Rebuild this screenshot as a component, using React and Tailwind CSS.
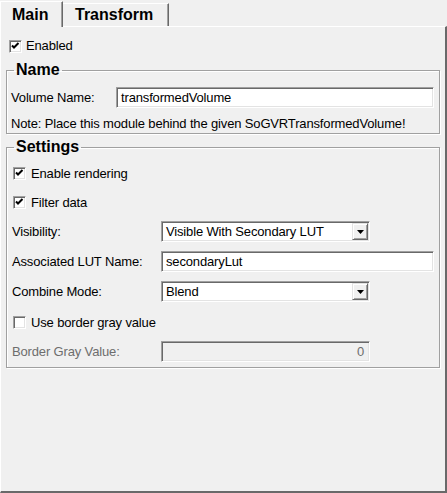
function CheckBox({ checked }) {
  return (
    <div className="w-[13px] h-[13px] shrink-0 bg-white border border-t-[#a0a0a0] border-l-[#a0a0a0] border-r-white border-b-white shadow-[inset_1px_1px_0_#696969,inset_-1px_-1px_0_#e3e3e3]">
      {checked && (
        <svg width="11" height="11" viewBox="0 0 11 11" className="block">
          <polyline points="2,4.5 4,6.5 8.5,2" fill="none" stroke="#000" strokeWidth="2" />
        </svg>
      )}
    </div>
  );
}

const sunken =
  "h-[21px] border border-t-[#a0a0a0] border-l-[#a0a0a0] border-r-white border-b-white shadow-[inset_1px_1px_0_#696969,inset_-1px_-1px_0_#e3e3e3] flex items-center";

function TextBox({ value, width }) {
  return (
    <div className={`${sunken} bg-white pl-[4px]`} style={{ width }}>
      {value}
    </div>
  );
}

function ComboBox({ value }) {
  return (
    <div className={`${sunken} w-[209px] bg-white pl-[4px] pr-[1px] justify-between`}>
      <span>{value}</span>
      <div className="w-[16px] h-[17px] bg-[#f0f0f0] border border-t-[#e3e3e3] border-l-[#e3e3e3] border-r-[#696969] border-b-[#696969] shadow-[inset_1px_1px_0_white,inset_-1px_-1px_0_#a0a0a0] flex items-center justify-center">
        <svg width="7" height="4" viewBox="0 0 7 4" className="block">
          <polygon points="0,0 7,0 3.5,4" fill="#000" />
        </svg>
      </div>
    </div>
  );
}

function Row({ label, children, className = "", muted }) {
  return (
    <div className={`flex items-center h-[21px] ${className}`}>
      <span className={`w-[149px] shrink-0 ${muted ? "text-[#6d6d6d]" : ""}`}>{label}</span>
      {children}
    </div>
  );
}

function CheckRow({ label, checked, className = "" }) {
  return (
    <div className={`flex items-center h-[21px] gap-[5px] pl-[1px] ${className}`}>
      <CheckBox checked={checked} />
      <span>{label}</span>
    </div>
  );
}

const group =
  "ml-[5px] w-[434px] border border-[#a0a0a0] shadow-[1px_1px_0_white,inset_1px_1px_0_white]";
const legend = "ml-[7px] px-[2px] h-[16px] leading-[16px] text-[16px] font-bold tracking-normal";

export default function App() {
  return (
    <div className="w-[447px] h-[493px] bg-[#f0f0f0] flex flex-col text-[13px] leading-[16px] tracking-[-0.15px] text-black font-['Liberation_Sans',sans-serif]">
      <div className="flex items-end h-[26px] shrink-0 tracking-normal">
        <div className="relative z-10 -mb-px h-[26px] w-[63px] bg-[#f0f0f0] border-l border-t border-white border-r border-r-[#696969] shadow-[inset_-1px_0_0_#a0a0a0] pl-[11px] pt-[5px] text-[16px] font-bold">
          Main
        </div>
        <div className="h-[23px] w-[106px] border-t border-white border-r border-r-[#696969] shadow-[inset_-1px_0_0_#a0a0a0] pl-[12px] pt-[3px] text-[16px] font-bold">
          Transform
        </div>
      </div>
      <div className="flex-1 border-t border-l border-white border-r-2 border-b-2 border-r-[#696969] border-b-[#696969] flex flex-col">
        <div className="flex items-start h-[13px] gap-[4px] ml-[8px] mt-[13px]">
          <CheckBox checked />
          <span className="leading-[11px]">Enabled</span>
        </div>

        <fieldset className={`${group} mt-[9px] px-0 pb-0`}>
          <legend className={legend}>Name</legend>
          <div className="pl-[4px]">
            <div className="flex items-center h-[21px] mt-[9px]">
              <span className="w-[105px] shrink-0">Volume Name:</span>
              <TextBox value="transformedVolume" width="318px" />
            </div>
            <div className="h-[16px] mt-[8px] mb-px">
              Note: Place this module behind the given SoGVRTransformedVolume!
            </div>
          </div>
        </fieldset>

        <fieldset className={`${group} mt-[5px] px-0 pb-[5px]`}>
          <legend className={legend}>Settings</legend>
          <div className="pl-[5px]">
            <CheckRow label="Enable rendering" checked className="mt-[8px]" />
            <CheckRow label="Filter data" checked className="mt-[8px]" />
            <Row label="Visibility:" className="mt-[8px]">
              <ComboBox value="Visible With Secondary LUT" />
            </Row>
            <Row label="Associated LUT Name:" className="mt-[9px]">
              <TextBox value="secondaryLut" width="273px" />
            </Row>
            <Row label="Combine Mode:" className="mt-[9px]">
              <ComboBox value="Blend" />
            </Row>
            <CheckRow label="Use border gray value" className="mt-[10px]" />
            <Row label="Border Gray Value:" muted className="mt-[8px]">
              <div className={`${sunken} w-[209px] bg-[#f0f0f0] justify-end pr-[5px] text-[#6d6d6d]`}>0</div>
            </Row>
          </div>
        </fieldset>
      </div>
    </div>
  );
}
